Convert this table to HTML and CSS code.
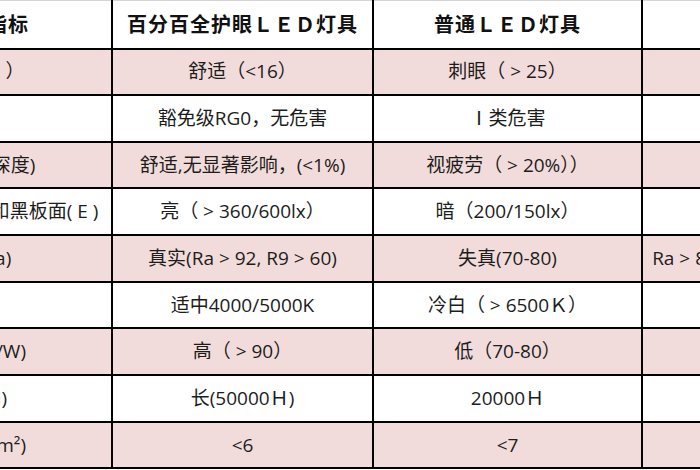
FILE: index.html
```html
<!DOCTYPE html>
<html lang="zh-CN">
<head>
<meta charset="utf-8">
<title>护眼LED灯具对比</title>
<link rel="stylesheet" href="styles.css">
</head>
<body>
<div class="viewport">
  <table class="grid">
    <colgroup>
      <col class="c-name">
      <col class="c-eye">
      <col class="c-std">
      <col class="c-more">
    </colgroup>
    <thead>
      <tr class="head">
        <th>灯具性能指标</th>
        <th>百分百全护眼ＬＥＤ灯具</th>
        <th>普通ＬＥＤ灯具</th>
        <th></th>
      </tr>
    </thead>
    <tbody>
      <tr class="pink"><td>眩光(UGR&nbsp;&nbsp; ）</td><td>舒适（&lt;16）</td><td>刺眼（ &gt; 25）</td><td></td></tr>
      <tr><td>蓝光</td><td>豁免级RG0，无危害</td><td>Ⅰ类危害</td><td></td></tr>
      <tr class="pink"><td>频闪（波动深度)</td><td>舒适,无显著影响，(&lt;1%)</td><td>视疲劳（ &gt; 20%））</td><td></td></tr>
      <tr><td>平均照度:书写桌面和黑板面( E )</td><td>亮（ &gt; 360/600lx）</td><td>暗（200/150lx）</td><td></td></tr>
      <tr class="pink"><td>显色性(Ra)</td><td>真实(Ra &gt; 92, R9 &gt; 60)</td><td>失真(70-80)</td><td>Ra &gt; 80</td></tr>
      <tr><td>色温</td><td>适中4000/5000K</td><td>冷白（ &gt; 6500Ｋ）</td><td></td></tr>
      <tr class="pink"><td>光效值 (lm/W)</td><td>高（ &gt; 90）</td><td>低（70-80）</td><td></td></tr>
      <tr><td>寿命值(H)</td><td>长(50000Ｈ)</td><td>20000Ｈ</td><td></td></tr>
      <tr class="pink"><td>亮度值(cd/m²)</td><td>&lt;6</td><td>&lt;7</td><td></td></tr>
    </tbody>
  </table>
</div>
</body>
</html>
```

FILE: styles.css
```css
html, body {
  margin: 0;
  padding: 0;
  background: #ffffff;
}

.viewport {
  width: 700px;
  height: 470px;
  overflow: hidden;
}

.grid {
  border-collapse: collapse;
  table-layout: fixed;
  width: 907px;
  margin-left: -181px;
  font-family: "Open Sans", "Noto Sans CJK SC", sans-serif;
  font-size: 19px;
  color: #1c1c1c;
}

.c-name { width: 292px; }
.c-eye { width: 261px; }
.c-std { width: 269px; }
.c-more { width: 85px; }

.grid th,
.grid td {
  border: 2px solid #000000;
  padding: 0;
  text-align: center;
  vertical-align: middle;
  white-space: nowrap;
  overflow: hidden;
  line-height: 1.2;
}

.grid th {
  border-top: 1px solid #d4d4d4;
  font-family: "Noto Sans CJK SC", sans-serif;
  font-weight: 700;
  font-size: 20px;
  letter-spacing: 1px;
  color: #111111;
}

.head { height: 48px; }

.grid tbody tr { height: 46.67px; }

.pink td { background: #f2dcdb; }
```
